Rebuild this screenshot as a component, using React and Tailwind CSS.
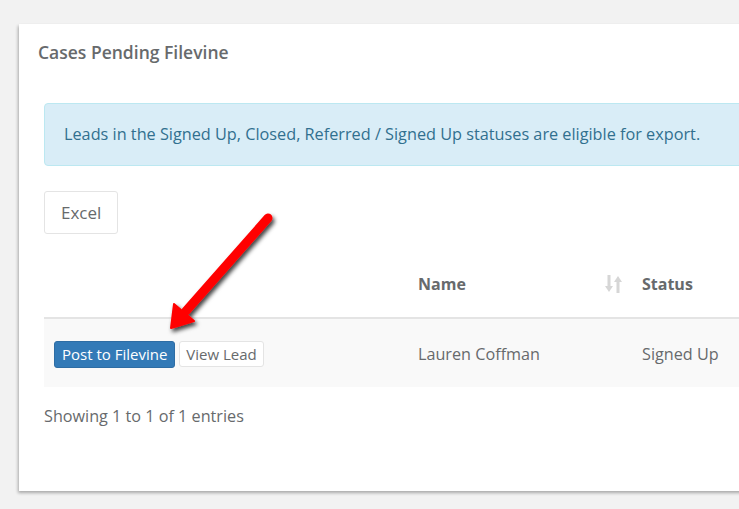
import React from 'react'

const SortIcon = () => (
    <svg width="17" height="18" viewBox="0 0 17 18" className="text-[#d6d6d6]">
        <rect x="2.5" y="0" width="3" height="13" fill="currentColor" />
        <path d="M0 11 L8 11 L4 17 Z" fill="currentColor" />
        <rect x="11.5" y="5" width="3" height="13" fill="currentColor" />
        <path d="M9 7 L17 7 L13 1 Z" fill="currentColor" />
    </svg>
)

const RedArrow = () => (
    <svg width="739" height="509" className="absolute left-0 top-0 pointer-events-none">
        <defs>
            <filter id="sh" x="-20%" y="-20%" width="140%" height="140%">
                <feDropShadow dx="2" dy="3" stdDeviation="2" floodColor="#000" floodOpacity="0.75" />
            </filter>
        </defs>
        <g filter="url(#sh)">
            <line x1="268" y1="218" x2="186" y2="311" stroke="#ff0000" strokeWidth="9" strokeLinecap="round" />
            <path d="M171 328 L174 304 L194 321 Z" fill="#ff0000" stroke="#ff0000" strokeWidth="2" strokeLinejoin="round" />
        </g>
    </svg>
)

export default function App() {
    return (
        <div className="relative w-[739px] h-[509px] overflow-hidden bg-[#f2f2f2] font-['Open_Sans',sans-serif]">
            <div className="absolute left-[19px] top-[24px] w-[760px] h-[467px] bg-white shadow-[-1px_2px_3px_rgba(0,0,0,0.3)]">
                <div className="pl-[19px] pt-[15px] h-[54px] text-[17.5px] font-semibold text-[#676a6c]">
                    Cases Pending Filevine
                </div>
                <div className="pl-[25px] pt-[25px]">
                    <div className="h-[63px] flex items-center pl-[19px] bg-[#d9edf7] border border-[#bce8f1] rounded-l-[4px] text-[#31708f] text-[16.25px]">
                        Leads in the Signed Up, Closed, Referred / Signed Up statuses are eligible for export.
                    </div>
                    <div className="mt-[25px]">
                        <button className="h-[43px] px-[16px] border border-[#e4e4e4] rounded-[3px] bg-white text-[17px] text-[#676a6c]">
                            Excel
                        </button>
                    </div>
                    <div className="mt-[17px] flex h-[68px] items-center border-b-2 border-[#e4e4e4] text-[16px] font-bold text-[#676a6c]">
                        <div className="w-[354px]" />
                        <div className="w-[244px] pl-5 pr-5 flex items-center justify-between">
                            <span>Name</span>
                            <SortIcon />
                        </div>
                        <div>Status</div>
                    </div>
                    <div className="flex h-[68px] items-center pt-[2px] bg-[#f9f9f9] text-[16.2px] text-[#676a6c]">
                        <div className="w-[354px] pl-[10px] flex items-center gap-[4px]">
                            <button className="h-[27px] px-[7px] rounded-[3px] bg-[#337ab7] border border-[#2e6da4] text-white text-[15px]">
                                Post to Filevine
                            </button>
                            <button className="h-[26px] px-[6px] rounded-[3px] bg-white border border-[#e4e4e4] text-[#676a6c] text-[15px]">
                                View Lead
                            </button>
                        </div>
                        <div className="w-[244px] pl-5">Lauren Coffman</div>
                        <div>Signed Up</div>
                    </div>
                    <div className="mt-[17px] text-[16.2px] text-[#676a6c]">
                        Showing 1 to 1 of 1 entries
                    </div>
                </div>
            </div>
            <RedArrow />
        </div>
    )
}
